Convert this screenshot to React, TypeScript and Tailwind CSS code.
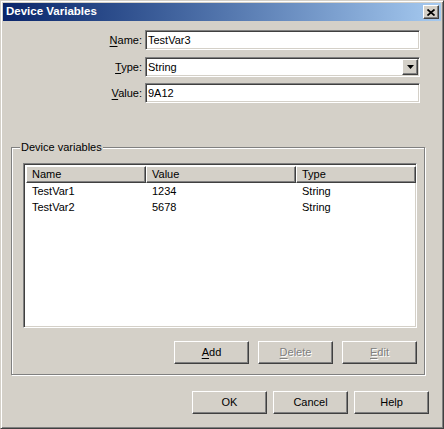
import React from "react";

const raised =
  "border border-t-white border-l-white border-r-[#404040] border-b-[#404040] shadow-[inset_-1px_-1px_0_#808080]";
const sunken =
  "border border-t-[#808080] border-l-[#808080] border-r-white border-b-white shadow-[inset_1px_1px_0_#404040,inset_-1px_-1px_0_#d4d0c8]";

type Variable = { name: string; value: string; type: string };

const variables: Variable[] = [
  { name: "TestVar1", value: "1234", type: "String" },
  { name: "TestVar2", value: "5678", type: "String" },
];

function Btn({
  children,
  disabled,
}: {
  children: React.ReactNode;
  disabled?: boolean;
}) {
  return (
    <div
      className={`${raised} w-[75px] h-[23px] flex items-center justify-center ${
        disabled ? "text-[#808080] [text-shadow:1px_1px_0_#fff]" : "text-black"
      }`}
    >
      {children}
    </div>
  );
}

function Mn({ children }: { children: React.ReactNode }) {
  return <span className="underline underline-offset-[2px]">{children}</span>;
}

function FieldRow({
  label,
  children,
  className,
}: {
  label: React.ReactNode;
  children: React.ReactNode;
  className?: string;
}) {
  return (
    <div className={`flex items-center ${className ?? ""}`}>
      <div className="w-[139px] text-right">{label}</div>
      <div className="ml-[3px] w-[275px]">{children}</div>
    </div>
  );
}

export default function App() {
  return (
    <div className="w-[444px] h-[429px] bg-[#d4d0c8] font-['Liberation_Sans',Arial,sans-serif] text-[11px] text-black">
      <div className="w-full h-full border border-t-[#d4d0c8] border-l-[#d4d0c8] border-r-[#404040] border-b-[#404040] shadow-[inset_1px_1px_0_#fff,inset_-1px_-1px_0_#808080] p-[2px] flex flex-col">
        {/* title bar */}
        <div className="h-[18px] bg-linear-to-r from-[#0a246a] to-[#a6caf0] flex items-center pl-[3px] pr-[2px]">
          <span className="text-white font-bold text-[11.5px] leading-none">
            Device Variables
          </span>
          <div
            className={`${raised} ml-auto w-[16px] h-[14px] bg-[#d4d0c8] flex items-center justify-center`}
          >
            <svg width="8" height="7" viewBox="0 0 8 7">
              <path d="M0.5 0.5 L7.5 6.5 M7.5 0.5 L0.5 6.5" stroke="#000" strokeWidth="1.7" />
            </svg>
          </div>
        </div>

        {/* form fields */}
        <FieldRow
          className="mt-[9px]"
          label={
            <>
              <Mn>N</Mn>ame:
            </>
          }
        >
          <div className={`${sunken} h-[20px] bg-white flex items-center pl-[2px]`}>
            TestVar3
          </div>
        </FieldRow>
        <FieldRow
          className="mt-[7px]"
          label={
            <>
              <Mn>T</Mn>ype:
            </>
          }
        >
          <div className={`${sunken} h-[20px] bg-white flex items-center pl-[2px]`}>
            <span>String</span>
            <div
              className={`${raised} ml-auto mr-[1px] w-[16px] h-[16px] bg-[#d4d0c8] flex items-center justify-center`}
            >
              <svg width="7" height="4" viewBox="0 0 7 4">
                <polygon points="0,0 7,0 3.5,4" fill="#000" />
              </svg>
            </div>
          </div>
        </FieldRow>
        <FieldRow
          className="mt-[6px]"
          label={
            <>
              <Mn>V</Mn>alue:
            </>
          }
        >
          <div className={`${sunken} h-[20px] bg-white flex items-center pl-[2px]`}>
            9A12
          </div>
        </FieldRow>

        {/* group box */}
        <div className="relative ml-[8px] mt-[44px] w-[414px] h-[228px] border border-[#808080] shadow-[inset_1px_1px_0_#fff,1px_1px_0_#fff] pt-[15px] pl-[11px]">
          <span className="absolute left-[8px] top-[-8px] bg-[#d4d0c8] px-[1px] leading-[14px]">
            Device variables
          </span>

          <div className={`${sunken} w-[394px] h-[165px] bg-white p-[2px]`}>
            <div className="grid grid-cols-[120px_150px_120px]">
              {["Name", "Value", "Type"].map((h) => (
                <div
                  key={h}
                  className={`${raised} h-[17px] bg-[#d4d0c8] flex items-center pl-[5px]`}
                >
                  {h}
                </div>
              ))}
            </div>
            {variables.map((v) => (
              <div key={v.name} className="grid grid-cols-[120px_150px_120px] h-[16px] items-center">
                <div className="pl-[6px]">{v.name}</div>
                <div className="pl-[6px]">{v.value}</div>
                <div className="pl-[6px]">{v.type}</div>
              </div>
            ))}
          </div>

          <div className="w-[394px] mt-[13px] flex justify-end gap-[9px]">
            <Btn>
              <Mn>A</Mn>dd
            </Btn>
            <Btn disabled>
              <Mn>D</Mn>elete
            </Btn>
            <Btn disabled>
              <Mn>E</Mn>dit
            </Btn>
          </div>
        </div>

        {/* dialog buttons */}
        <div className="mt-[16px] flex justify-end gap-[6px] pr-[12px]">
          <Btn>OK</Btn>
          <Btn>Cancel</Btn>
          <Btn>Help</Btn>
        </div>
      </div>
    </div>
  );
}
